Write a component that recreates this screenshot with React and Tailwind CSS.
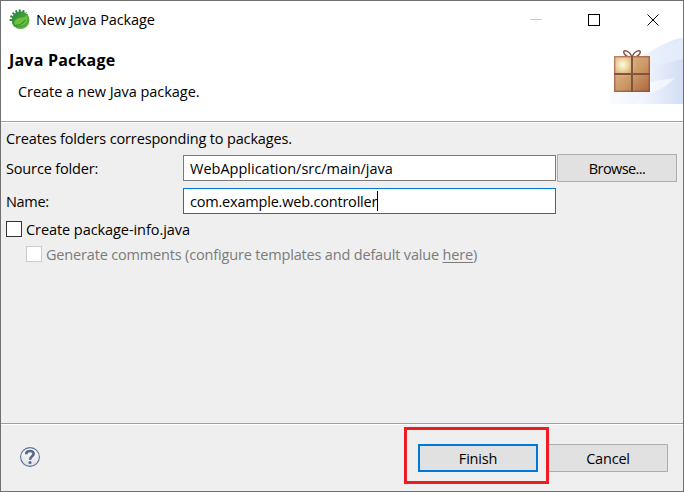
function SpringIcon() {
  return (
    <svg width="22" height="22" viewBox="0 0 22 22" className="shrink-0">
      <defs>
        <linearGradient id="leaf" x1="0" y1="0" x2="1" y2="1">
          <stop offset="0" stopColor="#268040" />
          <stop offset="1" stopColor="#66bd38" />
        </linearGradient>
      </defs>
      <path d="M2 12A9 9 0 0 1 17 4.2" fill="none" stroke="#2c8145" strokeWidth="2.6" strokeDasharray="1.9 1.6" />
      <circle cx="11.5" cy="11.2" r="8.9" fill="url(#leaf)" />
      <path d="M18.3 5C16.5 8.8 12 7.6 8.2 9.4C5 11 4.2 14 5.8 16.4C10.5 18 17 17.2 18.6 12C19.2 9.8 19 7 18.3 5Z" fill="#6fc13c" stroke="#43993a" strokeWidth=".8" />
      <path d="M4.8 16.6C10 16.6 14 14.8 16.4 10.8" fill="none" stroke="#318b3d" strokeWidth="1.1" />
    </svg>
  );
}

function PackageBanner() {
  return (
    <svg width="75" height="66" viewBox="0 0 75 66" className="shrink-0">
      <defs>
        <linearGradient id="sky" x1="0" x2="1">
          <stop offset="0" stopColor="#fbfcff" />
          <stop offset="1" stopColor="#dfe8f9" />
        </linearGradient>
        <linearGradient id="sky2" x1="0" x2="1">
          <stop offset="0" stopColor="#f8faff" />
          <stop offset="1" stopColor="#cedbf3" />
        </linearGradient>
        <linearGradient id="box" x1="0" y1="0" x2="1" y2="1">
          <stop offset="0" stopColor="#e2bf8e" />
          <stop offset=".55" stopColor="#cb9966" />
          <stop offset="1" stopColor="#ad673e" />
        </linearGradient>
        <radialGradient id="shine" cx=".22" cy=".22" r=".42">
          <stop offset="0" stopColor="#fffbe8" />
          <stop offset=".4" stopColor="#f1dfaa" stopOpacity=".85" />
          <stop offset="1" stopColor="#dfb780" stopOpacity="0" />
        </radialGradient>
        <linearGradient id="edge" x1="0" y1="0" x2="1" y2="1">
          <stop offset="0" stopColor="#bd8066" />
          <stop offset="1" stopColor="#965437" />
        </linearGradient>
      </defs>
      <path d="M0 66C2 47 19 25 43 13C53 7 64 1 75 0V66Z" fill="url(#sky)" />
      <path d="M28 66C39 52 39 33 57 25C65 22 70 22 75 21V66Z" fill="url(#sky2)" opacity=".75" />
      <path d="M75 0C64 7 55 13 44 30L75 21Z" fill="#e5edfb" opacity=".7" />
      <path d="M42 44C51 42 59 41 67 40C59 48 50 53 40 56Z" fill="#fff" opacity=".55" />
      <path d="M23.5 18.5C23 15 19 12.5 16.8 12.8C14.4 13.4 16.4 17 19.5 18.4M24.5 18.5C25 15 29 12.5 31.2 12.8C33.6 13.4 31.6 17 28.5 18.4" fill="none" stroke="#87574a" strokeWidth="1.5" />
      <rect x="6.75" y="18.75" width="34.5" height="34.5" fill="url(#box)" stroke="url(#edge)" strokeWidth="1.5" />
      <rect x="7.5" y="19.5" width="33" height="33" fill="url(#shine)" />
      <path d="M24 18V54M6 36H42" stroke="#82533e" strokeWidth="2" />
    </svg>
  );
}

function HelpIcon() {
  return (
    <svg width="20" height="20" viewBox="0 0 20 20">
      <defs>
        <linearGradient id="help" x1="0" y1="0" x2="0" y2="1">
          <stop offset="0" stopColor="#fff" />
          <stop offset="1" stopColor="#dedfe1" />
        </linearGradient>
      </defs>
      <circle cx="10" cy="10" r="9.4" fill="url(#help)" stroke="#5c7294" strokeWidth="1.1" />
      <path d="M6.2 7.2C6.2 3.1 13.7 3 13.7 6.8C13.7 9.3 10 9.2 10 12.7" fill="none" stroke="#536788" strokeWidth="2.6" />
      <circle cx="10" cy="15.6" r="1.5" fill="#536788" />
    </svg>
  );
}

function Separator() {
  return <div className="h-[2px] shrink-0 border-t border-[#a0a0a0] bg-white" />;
}

export default function App() {
  return (
    <div className="flex h-[492px] w-[684px] flex-col overflow-hidden whitespace-nowrap border border-[#707070] bg-[#efefef] font-['Open_Sans','Noto_Sans',sans-serif] text-[14.5px] leading-5 text-black">
      <header className="flex h-[120px] shrink-0 flex-col bg-white">
        <div className="flex h-[37px] shrink-0 items-center pl-2">
          <SpringIcon />
          <h1 className="ml-[5px] flex-1 tracking-[-0.1px]">New Java Package</h1>
          <svg width="130" height="12" viewBox="0 0 130 12" className="mr-6" shapeRendering="crispEdges">
            <path d="M1 5.5H13" stroke="#ccc" />
            <rect x="59.5" y=".5" width="11" height="11" fill="none" stroke="#000" />
            <path d="M118.5 .5L129.5 11.5M129.5 .5L118.5 11.5" stroke="#000" shapeRendering="auto" />
          </svg>
        </div>
        <div className="flex justify-between pl-2">
          <div className="pt-3">
            <h2 className="text-base leading-5 font-bold tracking-[0.2px]">Java Package</h2>
            <p className="mt-3 pl-[9px] tracking-[-0.04px]">Create a new Java package.</p>
          </div>
          <PackageBanner />
        </div>
      </header>
      <Separator />
      <main className="flex flex-1 flex-col pl-[5px]">
        <p className="mt-1.5 h-5 tracking-[-0.15px]">Creates folders corresponding to packages.</p>
        <div className="mt-[5px] flex h-7 items-center">
          <span className="w-[177px] pt-0.5 tracking-[-0.15px]">Source folder:</span>
          <div className="flex h-[26px] w-[373px] items-center border border-[#7a7a7a] bg-white pt-0.5 pl-1.5">WebApplication/src/main/java</div>
          <button className="ml-px h-7 w-[120px] border border-[#adadad] bg-[#e1e1e1] pt-px tracking-[-0.6px]">Browse...</button>
        </div>
        <div className="mt-1.5 flex h-[26px] items-center">
          <span className="w-[177px] pt-0.5 tracking-[-0.3px]">Name:</span>
          <div className="flex h-[26px] w-[373px] items-center border border-[#0078d7] bg-white pl-1.5 tracking-[-0.2px]">
            <span className="pt-0.5">com.example.web.controller</span>
            <span className="h-5 w-px bg-black" />
          </div>
        </div>
        <div className="mt-[7px] flex h-4 items-center tracking-[-0.07px]">
          <span className="mr-1 size-4 border border-[#333] bg-white" />
          <span className="pt-0.5">Create package-info.java</span>
        </div>
        <div className="mt-[9px] flex h-4 items-center pl-5 tracking-[-0.17px] text-[#7b7b7b]">
          <span className="mr-1 size-4 border border-[#ccc] bg-white" />
          <span className="pt-0.5">Generate comments (configure templates and default value <span className="underline underline-offset-2">here</span>)</span>
        </div>
      </main>
      <Separator />
      <footer className="flex h-[66px] shrink-0 items-start pl-[19px]">
        <div className="mt-[22px] flex-1"><HelpIcon /></div>
        <div className="z-10 mt-[2px] h-[57px] w-[145px] border-[3px] border-[#ed1c24] pl-[11px] pt-[14px]">
          <button className="block h-7 w-[120px] border-2 border-[#0078d7] bg-[#e1e1e1] pt-px tracking-[-0.2px]">Finish</button>
        </div>
        <button className="-ml-px mr-[15px] mt-[19px] h-7 w-[120px] border border-[#adadad] bg-[#e1e1e1] pt-px tracking-[-0.2px]">Cancel</button>
      </footer>
    </div>
  );
}
